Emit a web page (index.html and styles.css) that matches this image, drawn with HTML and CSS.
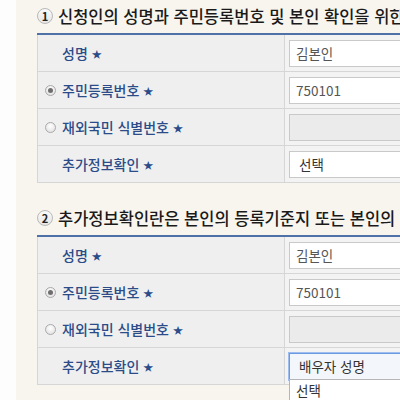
FILE: index.html
```html
<!DOCTYPE html>
<html lang="ko">
<head>
<meta charset="utf-8">
<link rel="stylesheet" href="styles.css">
</head>
<body>
<div class="page">
  <section class="sec">
    <h2 class="sec-title"><span class="num">1</span>신청인의 성명과 주민등록번호 및 본인 확인을 위한 추가정보를 입력하세요</h2>
    <div class="tbl">
      <div class="row">
        <div class="lbl"><span class="txt">성명 <span class="star">★</span></span></div>
        <div class="val"><div class="inp">김본인</div></div>
      </div>
      <div class="row">
        <div class="lbl radio-lbl"><span class="radio on"></span><span class="txt">주민등록번호 <span class="star">★</span></span></div>
        <div class="val"><div class="inp">750101</div></div>
      </div>
      <div class="row">
        <div class="lbl radio-lbl"><span class="radio"></span><span class="txt">재외국민 식별번호 <span class="star">★</span></span></div>
        <div class="val"><div class="inp dis"></div></div>
      </div>
      <div class="row">
        <div class="lbl"><span class="txt">추가정보확인 <span class="star">★</span></span></div>
        <div class="val"><div class="inp sel">선택</div></div>
      </div>
    </div>
  </section>
  <section class="sec sec2">
    <h2 class="sec-title"><span class="num">2</span>추가정보확인란은 본인의 등록기준지 또는 본인의 부모 성명을 입력하세요</h2>
    <div class="tbl">
      <div class="row">
        <div class="lbl"><span class="txt">성명 <span class="star">★</span></span></div>
        <div class="val"><div class="inp">김본인</div></div>
      </div>
      <div class="row">
        <div class="lbl radio-lbl"><span class="radio on"></span><span class="txt">주민등록번호 <span class="star">★</span></span></div>
        <div class="val"><div class="inp">750101</div></div>
      </div>
      <div class="row">
        <div class="lbl radio-lbl"><span class="radio"></span><span class="txt">재외국민 식별번호 <span class="star">★</span></span></div>
        <div class="val"><div class="inp dis"></div></div>
      </div>
      <div class="row">
        <div class="lbl"><span class="txt">추가정보확인 <span class="star">★</span></span></div>
        <div class="val">
          <div class="inp sel focus">배우자 성명</div>
          <div class="dropdown">
            <div class="opt">선택</div>
            <div class="opt">배우자 성명</div>
          </div>
        </div>
      </div>
    </div>
  </section>
</div>
</body>
</html>
```
FILE: styles.css
```css
html, body {
  margin: 0;
  padding: 0;
  overflow: hidden;
  height: 400px;
  background: #fdfdfd;
}
body {
  font-family: "Noto Sans CJK KR", "Noto Sans", sans-serif;
  color: #222;
}
.page {
  margin-left: 16px;
  background: #f8f5ee;
  padding: 4px 0 40px 21px;
  width: 700px;
  min-height: 400px;
}
.sec-title {
  margin: 0 0 5px 0;
  height: 24px;
  line-height: 24px;
  font-size: 16.5px;
  font-weight: 500;
  color: #1a1a1a;
  white-space: nowrap;
  display: flex;
  align-items: center;
}
.sec2 { margin-top: 23px; }
.num {
  box-sizing: border-box;
  width: 16px;
  height: 16px;
  border-radius: 50%;
  border: 1px solid #b9b9b9;
  background: linear-gradient(#fafafa, #e6e6e6);
  font-size: 11px;
  font-weight: 700;
  line-height: 14px;
  text-align: center;
  color: #222;
  margin-right: 5px;
  flex: none;
}
.tbl {
  border-top: 2px solid #4e72a8;
  width: 600px;
  background: #f2f2f2;
}
.row {
  display: flex;
  height: 36px;
  border-bottom: 1px solid #d6d6d6;
}
.lbl {
  box-sizing: border-box;
  width: 248px;
  flex: none;
  border-left: 1px solid #d6d6d6;
  border-right: 1px solid #d6d6d6;
  background: #efeff0;
  display: flex;
  align-items: center;
  padding-left: 24px;
  font-size: 14px;
  color: #2b4c88;
  font-weight: 500;
}
.radio-lbl { padding-left: 7px; }
.radio {
  box-sizing: border-box;
  width: 11px;
  height: 11px;
  border-radius: 50%;
  border: 1px solid #a9a9a9;
  background: radial-gradient(circle at 50% 35%, #ffffff, #dcdcdc);
  margin-right: 6px;
  position: relative;
  flex: none;
}
.radio.on::after {
  content: "";
  position: absolute;
  left: 2px;
  top: 2px;
  width: 5px;
  height: 5px;
  border-radius: 50%;
  background: #6e6e6e;
}
.star {
  font-size: 10px;
  vertical-align: 1px;
  color: #2b4c88;
}
.val {
  flex: 1;
  padding-left: 4px;
  display: flex;
  flex-direction: column;
  justify-content: center;
  position: relative;
  background: #f3f3f3;
}
.inp {
  box-sizing: border-box;
  height: 27px;
  border: 1px solid #c9c9c9;
  background: #fff;
  font-size: 13.5px;
  color: #555;
  line-height: 25px;
  padding-left: 6px;
  width: 300px;
}
.inp.dis {
  background: #ebebeb;
}
.inp.sel {
  padding-left: 9px;
  color: #333;
}
.inp.focus {
  border: 1px solid #6a9ae0;
  box-shadow: 0 0 0 1px #9dbdf0;
  background: #f3f7fb;
}
.dropdown {
  position: absolute;
  left: 4px;
  top: 31px;
  width: 300px;
  background: #fff;
  border: 1px solid #b5b5b5;
  z-index: 2;
}
.opt {
  font-size: 13.5px;
  color: #333;
  padding-left: 6px;
  height: 20px;
  line-height: 20px;
}
```
